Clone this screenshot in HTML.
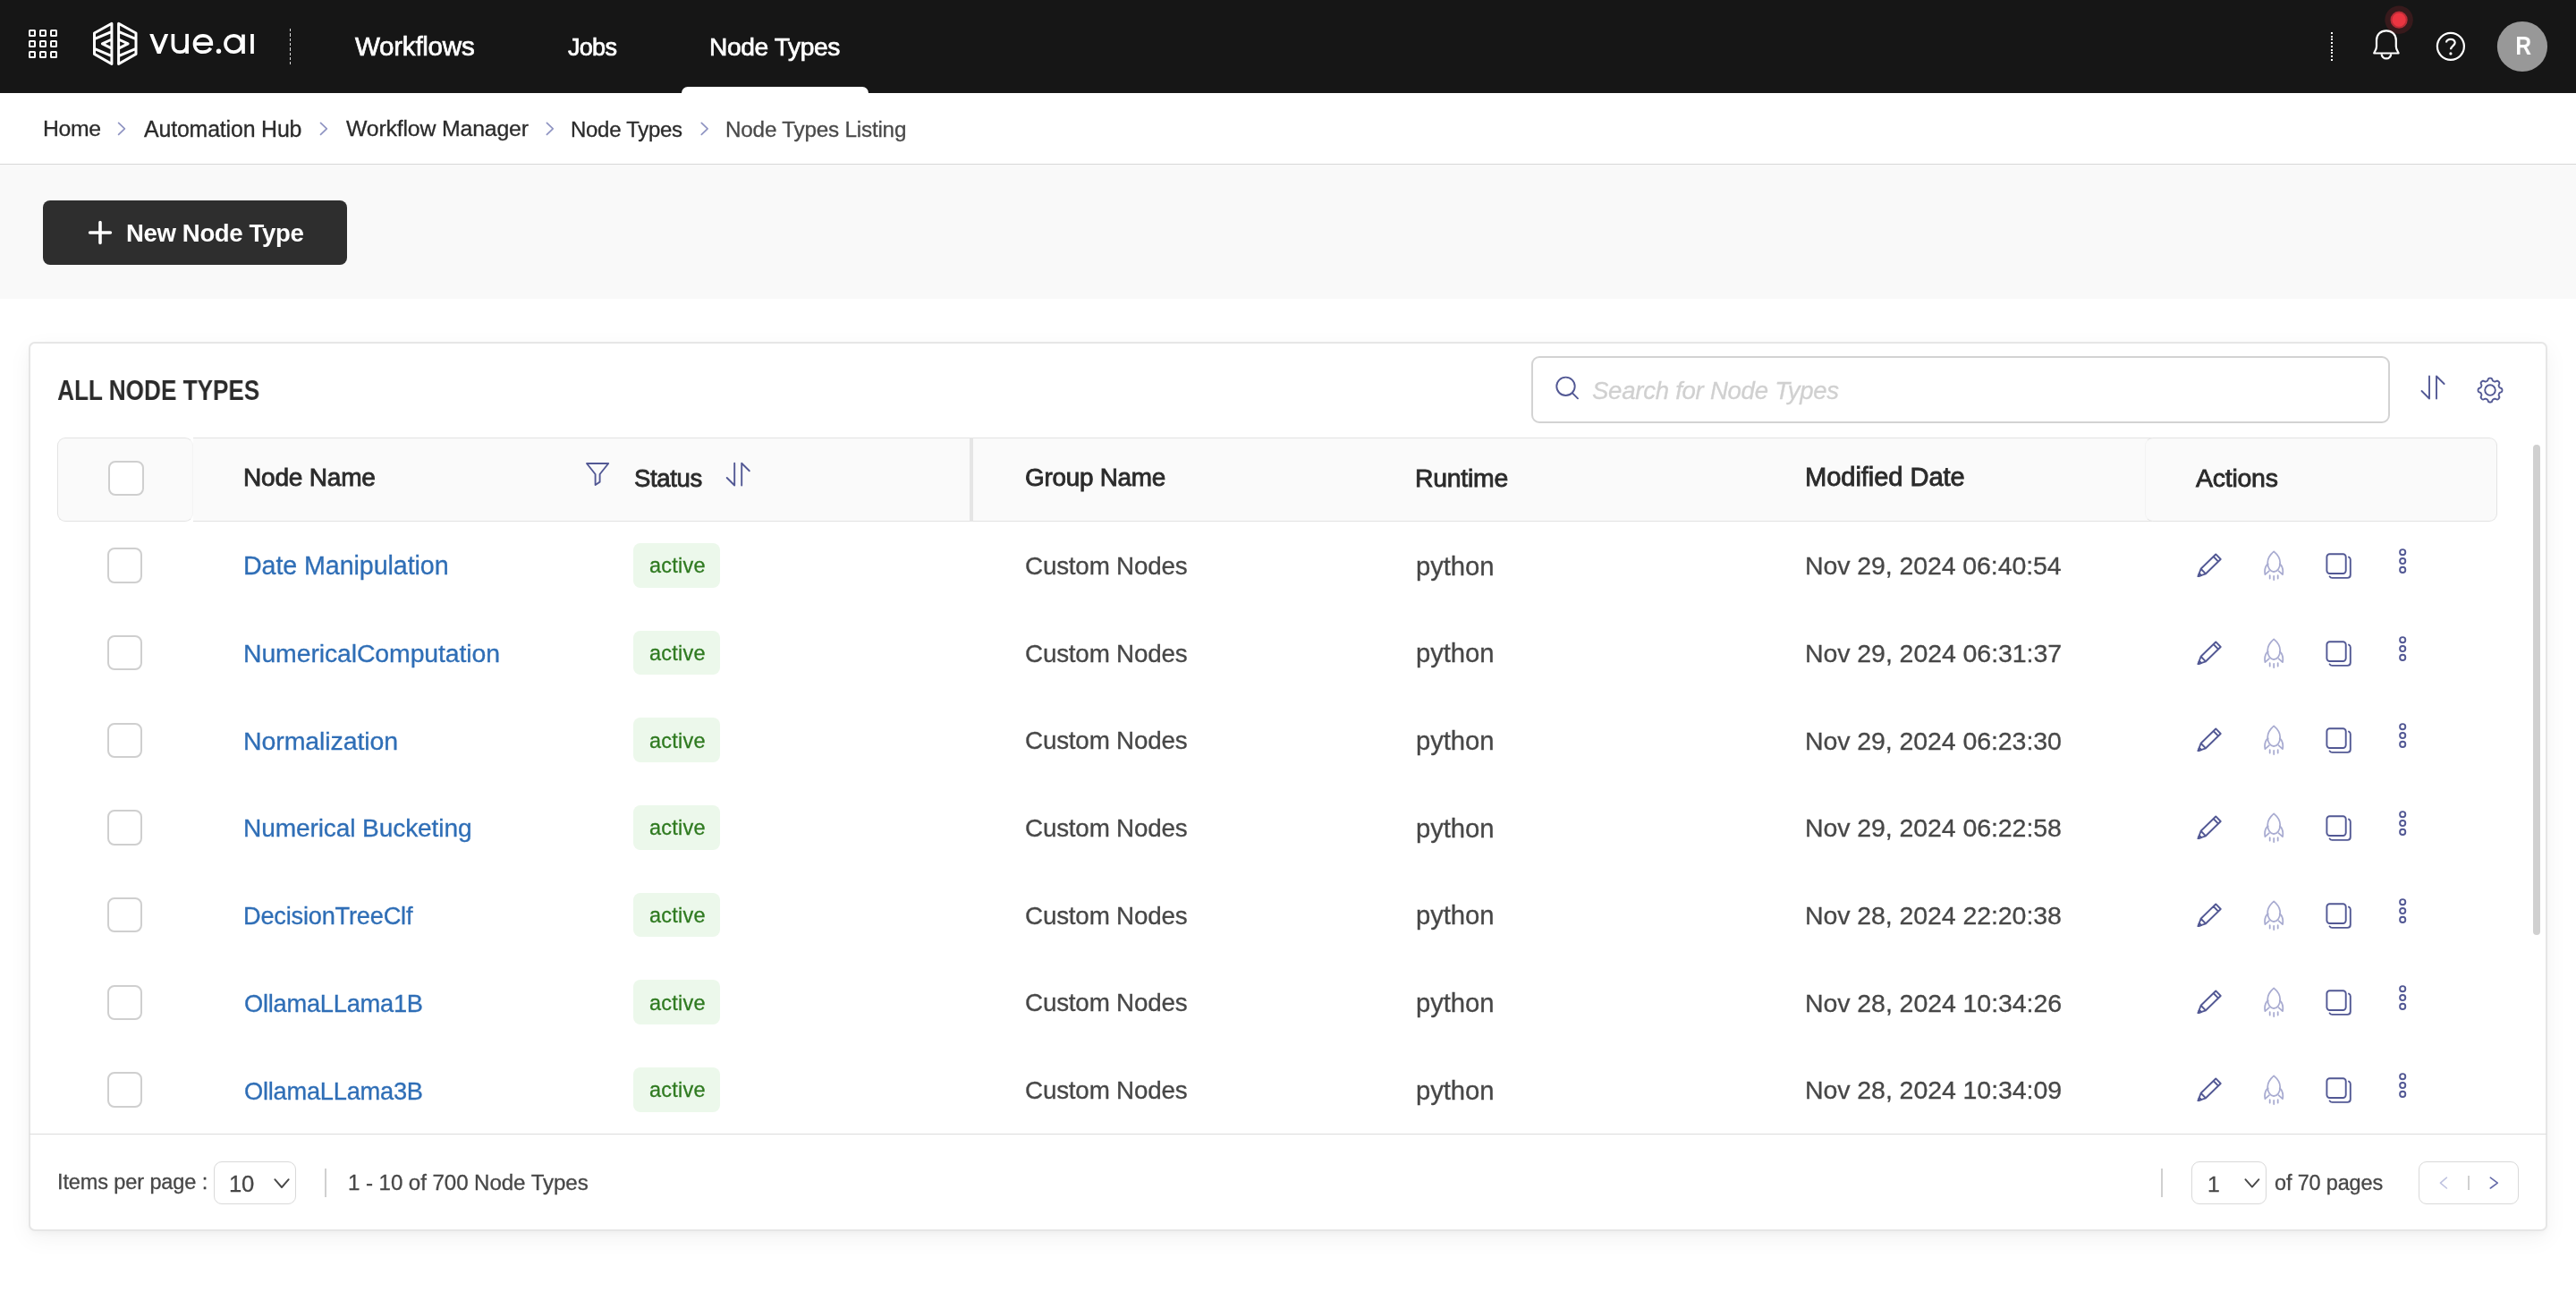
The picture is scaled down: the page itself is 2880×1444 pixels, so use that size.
<!DOCTYPE html>
<html><head><meta charset="utf-8"><title>Node Types Listing</title>
<style>
html,body{margin:0;padding:0;width:2880px;height:1444px;overflow:hidden;background:#fff;font-family:"Liberation Sans",sans-serif;}
.a{position:absolute;box-sizing:border-box}
.t{position:absolute;white-space:pre;will-change:transform}
#nav{position:absolute;left:0;top:0;width:2880px;height:104px;background:#161616}
.gsq{position:absolute;width:8.3px;height:8.3px;border:2px solid #fff;border-radius:1.5px;box-sizing:border-box}
#crumb{position:absolute;left:0;top:104px;width:2880px;height:80px;background:#fff;border-bottom:1px solid #d8d8d8;box-sizing:border-box}
#strip{position:absolute;left:0;top:184px;width:2880px;height:150px;background:#f9f9f9}
#btn{position:absolute;left:48px;top:224px;width:340px;height:72px;background:#2e2e2e;border-radius:8px}
#card{position:absolute;left:32px;top:381.8px;width:2815.7px;height:994.7px;border:2px solid #e6e6e6;border-radius:7px;box-sizing:border-box;background:#fff;box-shadow:0 3px 6px rgba(0,0,0,0.025),0 8px 26px rgba(0,0,0,0.05)}
#search{position:absolute;left:1711.8px;top:397.9px;width:960px;height:75px;border:2px solid #d3d3d3;border-radius:9px;box-sizing:border-box}
.hdr{position:absolute;top:489.3px;height:93.8px;background:#fafafa;box-sizing:border-box;border-top:1.2px solid #e3e3e3;border-bottom:1.2px solid #e3e3e3}
.cb{position:absolute;width:39.4px;height:39.3px;border:2px solid #cfcfcf;border-radius:8px;box-sizing:border-box;background:#fff}
.badge{position:absolute;width:96.7px;height:49.5px;background:#ecf8eb;border-radius:8px}
.ic{position:absolute;overflow:visible}
.sel{position:absolute;border:1.2px solid #d9d9d9;border-radius:9px;box-sizing:border-box;background:#fff}
</style></head>
<body>
<svg width="0" height="0" style="position:absolute">
<defs>
<g id="acts" fill="none" stroke-linecap="round" stroke-linejoin="round">
  <g stroke="#525894" stroke-width="1.9">
    <g transform="translate(7.6,36.1) rotate(-44.3)">
      <path d="M0,0 L8,-3.9 H31.3 V3.9 H8 Z M8,-3.9 V3.9 M27.6,-3.9 V3.9"/>
      <path d="M0,0 L3.2,-1.6 V1.6 Z" fill="#525894"/>
    </g>
  </g>
  <g stroke="#a9acd1" stroke-width="1.8">
    <path d="M92.2,8.4 C96.6,12 99.2,16 99.2,21 C99.2,27 95.9,31 92.2,31 C88.5,31 85.2,27 85.2,21 C85.2,16 87.8,12 92.2,8.4 Z"/>
    <path d="M85.6,22.3 C82.6,24.8 81.4,28.3 82.4,34.2 L86.9,30.2 M98.8,22.3 C101.8,24.8 103,28.3 102,34.2 L97.5,30.2"/>
    <path d="M87.7,35.2 V38.6 M92.2,35.8 V40 M96.7,35.2 V38.6"/>
  </g>
  <g stroke="#525894" stroke-width="1.9">
    <rect x="151.4" y="11.2" width="21.3" height="21.8" rx="3.2"/>
    <path d="M176,14.6 Q177.8,15.4 177.8,17.6 V34.5 Q177.8,37.9 174.4,37.9 H157.4 Q155.4,37.9 154.6,36.4"/>
    <circle cx="236.2" cy="9.2" r="3.1"/>
    <circle cx="236.2" cy="19.05" r="3.1"/>
    <circle cx="236.2" cy="28.9" r="3.1"/>
  </g>
</g>
</defs>
</svg>

<div id="nav"></div>
<!-- grid icon -->
<div class="gsq" style="left:31.8px;top:32.9px"></div><div class="gsq" style="left:43.9px;top:32.9px"></div><div class="gsq" style="left:56px;top:32.9px"></div>
<div class="gsq" style="left:31.8px;top:45px"></div><div class="gsq" style="left:43.9px;top:45px"></div><div class="gsq" style="left:56px;top:45px"></div>
<div class="gsq" style="left:31.8px;top:57px"></div><div class="gsq" style="left:43.9px;top:57px"></div><div class="gsq" style="left:56px;top:57px"></div>
<!-- logo -->
<svg class="ic" style="left:98px;top:20px" width="64" height="60" viewBox="0 0 64 60">
 <g fill="none" stroke="#fff" stroke-width="3" stroke-linejoin="round">
  <path d="M26.9,6.3 L7.5,17 V40.4 L26.9,51.5 Z M7.5,23.7 L26.9,15.3 M26.9,24 L16.4,28.9 L26.9,34.1 M7.5,34.3 L26.9,42.7"/>
  <path d="M34.6,6.3 L54,17 V40.4 L34.6,51.5 Z M54,23.7 L34.6,15.3 M34.6,24 L45.1,28.9 L34.6,34.1 M54,34.3 L34.6,42.7"/>
 </g>
</svg>
<svg class="ic" style="left:160px;top:30px" width="132" height="38" viewBox="0 0 132 38">
 <g fill="none" stroke="#fff" stroke-width="3.7">
  
  <path d="M33.4,7.9 V20 C33.4,25.5 36.6,28.2 41.2,28.2 C45.8,28.2 49.1,25.5 49.1,20"/>
  <path d="M49.1,7.9 V29.9"/>
  <path d="M58.2,19.2 H76.3 C76.3,13.5 72.6,9.8 66.9,9.8 C61.2,9.8 57.5,13.8 57.5,19 C57.5,24.4 61.2,28.2 66.9,28.2 C70.6,28.2 73.8,26.6 75.6,23.8"/>
  <circle cx="101.2" cy="19" r="9.2"/>
  <path d="M112,8.5 V29.9 M122,7.9 V29.9"/>
 </g>
 <circle cx="84.5" cy="27.3" r="2.7" fill="#fff"/>
 <path d="M7.2,7.9 H11.3 L17.7,23.6 L24.1,7.9 H28.2 L19.6,29.9 H15.8 Z" fill="#fff"/>
</svg>
<div class="a" style="left:323.7px;top:31.8px;width:1.3px;height:40.4px;background:repeating-linear-gradient(to bottom,#d8d8d8 0 3.2px,transparent 3.2px 5.33px)"></div>
<div class="a" style="left:761.8px;top:96.9px;width:209px;height:7.5px;background:#fff;border-radius:8px 8px 0 0"></div>
<!-- right nav -->
<div class="a" style="left:2606px;top:36px;width:2px;height:32.2px;background:repeating-linear-gradient(to bottom,#fff 0 2px,transparent 2px 3.75px)"></div>
<svg class="ic" style="left:0;top:0" width="2880" height="104" viewBox="0 0 2880 104">
 <g fill="none" stroke="#fff" stroke-width="2.2" stroke-linejoin="round">
  <path d="M2654.2,59.5 C2654.2,58 2657,56 2657,52 V45 C2657,38.5 2661.5,34.3 2667.9,34.3 C2674.3,34.3 2678.8,38.5 2678.8,45 V52 C2678.8,56 2681.6,58 2681.6,59.5 Z"/>
  <path d="M2662.6,60.2 A5.3,5.3 0 0 0 2673.2,60.2"/>
  <circle cx="2739.9" cy="51.85" r="15"/>
  <path d="M2735,47.5 C2735,45.3 2737.2,43.8 2739.9,43.8 C2742.6,43.8 2744.7,45.5 2744.7,47.8 C2744.7,50.9 2740,51.4 2740,55.3"/>
 </g>
 <circle cx="2739.9" cy="59.9" r="1.6" fill="#fff"/>
 <circle cx="2682.1" cy="22.2" r="15.7" fill="#ed3340" fill-opacity="0.16"/>
 <circle cx="2682.1" cy="22.2" r="8.6" fill="#ec3541" stroke="#b82c36" stroke-width="2"/>
 <circle cx="2819.95" cy="52" r="28.1" fill="#989898"/>
</svg>

<div id="crumb"></div>
<svg class="ic" style="left:0;top:104px" width="1100" height="80" viewBox="0 104 1100 80">
 <g fill="none" stroke="#8f94c2" stroke-width="1.7" stroke-linecap="round" stroke-linejoin="round">
  <path d="M132.6,137.4 L139.4,143.8 L132.6,150.4"/>
  <path d="M358.5,137.4 L365.3,143.8 L358.5,150.4"/>
  <path d="M611.4,137.4 L618.2,143.8 L611.4,150.4"/>
  <path d="M784.3,137.4 L791.1,143.8 L784.3,150.4"/>
 </g>
</svg>
<div id="strip"></div>
<div id="btn"></div>
<svg class="ic" style="left:0;top:0" width="400" height="334" viewBox="0 0 400 334">
 <path d="M112,248.6 V271.4 M100.6,260 H123.4" stroke="#fff" stroke-width="3.6" stroke-linecap="round"/>
</svg>

<div id="card"></div>
<div id="search"></div>
<svg class="ic" style="left:0;top:0" width="2880" height="1444" viewBox="0 0 2880 1444">
 <g fill="none" stroke="#525894" stroke-width="1.9" stroke-linecap="round" stroke-linejoin="round">
  <circle cx="1750.5" cy="431.8" r="10.2"/>
  <path d="M1758,439.3 L1764,445.3"/>
  <path d="M2716,420.5 V445.5 M2707.5,437 L2716,445.5 M2724,445.5 V420.5 L2732.6,429"/>
  <path d="M2784.00,422.65 L2784.53,422.67 L2785.05,422.76 L2785.55,422.97 L2786.01,423.44 L2786.36,424.23 L2786.66,425.03 L2786.98,425.53 L2787.34,425.81 L2787.73,426.00 L2788.11,426.17 L2788.51,426.32 L2788.91,426.46 L2789.37,426.52 L2789.95,426.40 L2790.72,426.04 L2791.54,425.73 L2792.18,425.72 L2792.69,425.93 L2793.12,426.23 L2793.51,426.59 L2793.87,426.98 L2794.17,427.41 L2794.38,427.92 L2794.37,428.56 L2794.06,429.38 L2793.70,430.15 L2793.58,430.73 L2793.64,431.19 L2793.78,431.59 L2793.93,431.99 L2794.10,432.37 L2794.29,432.76 L2794.57,433.12 L2795.07,433.44 L2795.87,433.74 L2796.66,434.09 L2797.13,434.55 L2797.34,435.05 L2797.43,435.57 L2797.45,436.10 L2797.43,436.63 L2797.34,437.15 L2797.13,437.65 L2796.66,438.11 L2795.87,438.46 L2795.07,438.76 L2794.57,439.08 L2794.29,439.44 L2794.10,439.83 L2793.93,440.21 L2793.78,440.61 L2793.64,441.01 L2793.58,441.47 L2793.70,442.05 L2794.06,442.82 L2794.37,443.64 L2794.38,444.28 L2794.17,444.79 L2793.87,445.22 L2793.51,445.61 L2793.12,445.97 L2792.69,446.27 L2792.18,446.48 L2791.54,446.47 L2790.72,446.16 L2789.95,445.80 L2789.37,445.68 L2788.91,445.74 L2788.51,445.88 L2788.11,446.03 L2787.73,446.20 L2787.34,446.39 L2786.98,446.67 L2786.66,447.17 L2786.36,447.97 L2786.01,448.76 L2785.55,449.23 L2785.05,449.44 L2784.53,449.53 L2784.00,449.55 L2783.47,449.53 L2782.95,449.44 L2782.45,449.23 L2781.99,448.76 L2781.64,447.97 L2781.34,447.17 L2781.02,446.67 L2780.66,446.39 L2780.27,446.20 L2779.89,446.03 L2779.49,445.88 L2779.09,445.74 L2778.63,445.68 L2778.05,445.80 L2777.28,446.16 L2776.46,446.47 L2775.82,446.48 L2775.31,446.27 L2774.88,445.97 L2774.49,445.61 L2774.13,445.22 L2773.83,444.79 L2773.62,444.28 L2773.63,443.64 L2773.94,442.82 L2774.30,442.05 L2774.42,441.47 L2774.36,441.01 L2774.22,440.61 L2774.07,440.21 L2773.90,439.83 L2773.71,439.44 L2773.43,439.08 L2772.93,438.76 L2772.13,438.46 L2771.34,438.11 L2770.87,437.65 L2770.66,437.15 L2770.57,436.63 L2770.55,436.10 L2770.57,435.57 L2770.66,435.05 L2770.87,434.55 L2771.34,434.09 L2772.13,433.74 L2772.93,433.44 L2773.43,433.12 L2773.71,432.76 L2773.90,432.37 L2774.07,431.99 L2774.22,431.59 L2774.36,431.19 L2774.42,430.73 L2774.30,430.15 L2773.94,429.38 L2773.63,428.56 L2773.62,427.92 L2773.83,427.41 L2774.13,426.98 L2774.49,426.59 L2774.88,426.23 L2775.31,425.93 L2775.82,425.72 L2776.46,425.73 L2777.28,426.04 L2778.05,426.40 L2778.63,426.52 L2779.09,426.46 L2779.49,426.32 L2779.89,426.17 L2780.27,426.00 L2780.66,425.81 L2781.02,425.53 L2781.34,425.03 L2781.64,424.23 L2781.99,423.44 L2782.45,422.97 L2782.95,422.76 L2783.47,422.67 Z"/>
  <circle cx="2784" cy="436.1" r="5.8"/>
 </g>
</svg>

<!-- table header -->
<div class="hdr" style="left:215.8px;width:2190px"></div>
<div class="hdr" style="left:64.3px;width:151.5px;border:1.2px solid #e3e3e3;border-right-color:#f3f3f3;border-radius:9px"></div>
<div class="hdr" style="left:2398px;width:394px;border:1.2px solid #e3e3e3;border-left-color:#f3f3f3;border-radius:9px"></div>
<div class="a" style="left:1084.1px;top:489.3px;width:3.9px;height:93.8px;background:#e5e5e5"></div>
<div class="cb" style="left:121.4px;top:514.5px"></div>
<svg class="ic" style="left:0;top:0" width="1000" height="600" viewBox="0 0 1000 600">
 <g fill="none" stroke="#525894" stroke-width="1.9" stroke-linecap="round" stroke-linejoin="round">
  <path d="M656,518 H680.2 L670.6,530 V538.6 L665.6,542 V530 Z"/>
  <path d="M821.2,517.8 V542.5 M812.7,534 L821.2,542.5 M829.2,542.5 V517.8 L837.8,526.3"/>
 </g>
</svg>
<div class="cb" style="left:120px;top:612.30px"></div>
<div class="badge" style="left:708px;top:607.10px"></div>
<svg class="ic" style="left:2450px;top:608.00px" width="250" height="50" viewBox="0 0 250 50"><use href="#acts"/></svg>
<div class="cb" style="left:120px;top:709.97px"></div>
<div class="badge" style="left:708px;top:704.77px"></div>
<svg class="ic" style="left:2450px;top:705.67px" width="250" height="50" viewBox="0 0 250 50"><use href="#acts"/></svg>
<div class="cb" style="left:120px;top:807.64px"></div>
<div class="badge" style="left:708px;top:802.44px"></div>
<svg class="ic" style="left:2450px;top:803.34px" width="250" height="50" viewBox="0 0 250 50"><use href="#acts"/></svg>
<div class="cb" style="left:120px;top:905.31px"></div>
<div class="badge" style="left:708px;top:900.11px"></div>
<svg class="ic" style="left:2450px;top:901.01px" width="250" height="50" viewBox="0 0 250 50"><use href="#acts"/></svg>
<div class="cb" style="left:120px;top:1002.98px"></div>
<div class="badge" style="left:708px;top:997.78px"></div>
<svg class="ic" style="left:2450px;top:998.68px" width="250" height="50" viewBox="0 0 250 50"><use href="#acts"/></svg>
<div class="cb" style="left:120px;top:1100.65px"></div>
<div class="badge" style="left:708px;top:1095.45px"></div>
<svg class="ic" style="left:2450px;top:1096.35px" width="250" height="50" viewBox="0 0 250 50"><use href="#acts"/></svg>
<div class="cb" style="left:120px;top:1198.32px"></div>
<div class="badge" style="left:708px;top:1193.12px"></div>
<svg class="ic" style="left:2450px;top:1194.02px" width="250" height="50" viewBox="0 0 250 50"><use href="#acts"/></svg>
<div class="a" style="left:2832.4px;top:497.3px;width:8.1px;height:548px;background:#d0d0d0;border-radius:4px"></div>
<div class="a" style="left:33px;top:1266.6px;width:2814px;height:1.2px;background:#dcdcdc"></div>

<!-- footer -->
<div class="sel" style="left:239.1px;top:1298.3px;width:91.6px;height:47.3px"></div>
<div class="sel" style="left:2450.2px;top:1298px;width:83.5px;height:47.6px"></div>
<div class="sel" style="left:2704.2px;top:1298px;width:111.4px;height:47.6px"></div>
<div class="a" style="left:362.8px;top:1306px;width:2px;height:31.5px;background:#d0d0d0"></div>
<div class="a" style="left:2416px;top:1306px;width:2px;height:31.8px;background:#d0d0d0"></div>
<div class="a" style="left:2758.8px;top:1314px;width:2px;height:16px;background:#d0d0d0"></div>
<svg class="ic" style="left:0;top:1280px" width="2880" height="80" viewBox="0 1280 2880 80">
 <g fill="none" stroke-width="1.9" stroke-linecap="round" stroke-linejoin="round">
  <path d="M307.3,1318.2 L315,1327 L322.7,1318.2" stroke="#474747"/>
  <path d="M2510.4,1318.2 L2517.9,1326.6 L2525.4,1318.2" stroke="#474747"/>
  <path d="M2735.4,1316.2 L2728.4,1322.1 L2735.4,1328" stroke="#bfc3e0" stroke-width="1.6"/>
  <path d="M2784.3,1316.2 L2792.3,1322.1 L2784.3,1328" stroke="#646aa8" stroke-width="1.6"/>
 </g>
</svg>
<div class="t" style="left:397.30px;top:36.95px;font-size:29.59px;line-height:29.59px;color:#ffffff;letter-spacing:-0.274px;-webkit-text-stroke:0.7px #ffffff">Workflows</div>
<div class="t" style="left:634.66px;top:39.06px;font-size:27.10px;line-height:27.10px;color:#ffffff;letter-spacing:-0.760px;-webkit-text-stroke:0.7px #ffffff">Jobs</div>
<div class="t" style="left:792.54px;top:38.12px;font-size:28.21px;line-height:28.21px;color:#ffffff;letter-spacing:-0.408px;-webkit-text-stroke:0.7px #ffffff">Node Types</div>
<div class="t" style="left:2811.53px;top:36.45px;font-size:30.29px;line-height:30.29px;color:#ffffff;transform:scaleX(0.8044);transform-origin:2.12px 0;font-weight:bold">R</div>
<div class="t" style="left:47.92px;top:132.23px;font-size:24.79px;line-height:24.79px;color:#2b2b2b;letter-spacing:-0.337px;-webkit-text-stroke:0.3px #2b2b2b">Home</div>
<div class="t" style="left:161.40px;top:132.12px;font-size:24.92px;line-height:24.92px;color:#2b2b2b;letter-spacing:-0.164px;-webkit-text-stroke:0.3px #2b2b2b">Automation Hub</div>
<div class="t" style="left:386.75px;top:132.20px;font-size:24.83px;line-height:24.83px;color:#2b2b2b;letter-spacing:-0.171px;-webkit-text-stroke:0.3px #2b2b2b">Workflow Manager</div>
<div class="t" style="left:638.48px;top:132.92px;font-size:23.97px;line-height:23.97px;color:#2b2b2b;letter-spacing:-0.278px;-webkit-text-stroke:0.3px #2b2b2b">Node Types</div>
<div class="t" style="left:810.86px;top:132.68px;font-size:24.25px;line-height:24.25px;color:#4a4a4a;letter-spacing:-0.201px;-webkit-text-stroke:0.3px #4a4a4a">Node Types Listing</div>
<div class="t" style="left:141.12px;top:246.76px;font-size:27.57px;line-height:27.57px;color:#ffffff;letter-spacing:-0.368px;font-weight:bold">New Node Type</div>
<div class="t" style="left:63.94px;top:421.13px;font-size:30.43px;line-height:30.43px;color:#2b2b2b;transform:scaleX(0.8595);transform-origin:0.91px 0;font-weight:bold">ALL NODE TYPES</div>
<div class="t" style="left:1779.97px;top:422.56px;font-size:27.58px;line-height:27.58px;color:#d0d0d0;letter-spacing:-0.271px;font-style:italic;-webkit-text-stroke:0.3px #d0d0d0">Search for Node Types</div>
<div class="t" style="left:272.13px;top:520.21px;font-size:28.10px;line-height:28.10px;color:#2b2b2b;letter-spacing:-0.241px;-webkit-text-stroke:0.85px #2b2b2b">Node Name</div>
<div class="t" style="left:708.80px;top:520.70px;font-size:27.53px;line-height:27.53px;color:#2b2b2b;letter-spacing:-0.340px;-webkit-text-stroke:0.85px #2b2b2b">Status</div>
<div class="t" style="left:1146.48px;top:520.39px;font-size:27.89px;line-height:27.89px;color:#2b2b2b;letter-spacing:-0.247px;-webkit-text-stroke:0.85px #2b2b2b">Group Name</div>
<div class="t" style="left:1582.30px;top:519.97px;font-size:28.39px;line-height:28.39px;color:#2b2b2b;letter-spacing:-0.235px;-webkit-text-stroke:0.85px #2b2b2b">Runtime</div>
<div class="t" style="left:2018.04px;top:519.33px;font-size:29.14px;line-height:29.14px;color:#2b2b2b;letter-spacing:-0.083px;-webkit-text-stroke:0.85px #2b2b2b">Modified Date</div>
<div class="t" style="left:2455.47px;top:519.93px;font-size:28.44px;line-height:28.44px;color:#2b2b2b;letter-spacing:-0.222px;-webkit-text-stroke:0.85px #2b2b2b">Actions</div>
<div class="t" style="left:271.91px;top:618.34px;font-size:28.66px;line-height:28.66px;color:#2f6eb6;letter-spacing:-0.085px;-webkit-text-stroke:0.3px #2f6eb6">Date Manipulation</div>
<div class="t" style="left:725.66px;top:621.44px;font-size:23.49px;line-height:23.49px;color:#2f7a20;letter-spacing:0.225px;-webkit-text-stroke:0.3px #2f7a20">active</div>
<div class="t" style="left:1146.21px;top:619.07px;font-size:27.80px;line-height:27.80px;color:#474747;letter-spacing:-0.197px;-webkit-text-stroke:0.3px #474747">Custom Nodes</div>
<div class="t" style="left:1582.54px;top:617.81px;font-size:29.28px;line-height:29.28px;color:#474747;letter-spacing:-0.074px;-webkit-text-stroke:0.3px #474747">python</div>
<div class="t" style="left:2017.82px;top:618.46px;font-size:28.52px;line-height:28.52px;color:#474747;letter-spacing:-0.095px;-webkit-text-stroke:0.3px #474747">Nov 29, 2024 06:40:54</div>
<div class="t" style="left:271.93px;top:716.20px;font-size:28.43px;line-height:28.43px;color:#2f6eb6;letter-spacing:-0.108px;-webkit-text-stroke:0.3px #2f6eb6">NumericalComputation</div>
<div class="t" style="left:725.66px;top:719.11px;font-size:23.49px;line-height:23.49px;color:#2f7a20;letter-spacing:0.225px;-webkit-text-stroke:0.3px #2f7a20">active</div>
<div class="t" style="left:1146.21px;top:716.74px;font-size:27.80px;line-height:27.80px;color:#474747;letter-spacing:-0.197px;-webkit-text-stroke:0.3px #474747">Custom Nodes</div>
<div class="t" style="left:1582.54px;top:715.48px;font-size:29.28px;line-height:29.28px;color:#474747;letter-spacing:-0.074px;-webkit-text-stroke:0.3px #474747">python</div>
<div class="t" style="left:2017.81px;top:716.09px;font-size:28.56px;line-height:28.56px;color:#474747;letter-spacing:-0.090px;-webkit-text-stroke:0.3px #474747">Nov 29, 2024 06:31:37</div>
<div class="t" style="left:271.92px;top:813.79px;font-size:28.52px;line-height:28.52px;color:#2f6eb6;letter-spacing:-0.104px;-webkit-text-stroke:0.3px #2f6eb6">Normalization</div>
<div class="t" style="left:725.66px;top:816.78px;font-size:23.49px;line-height:23.49px;color:#2f7a20;letter-spacing:0.225px;-webkit-text-stroke:0.3px #2f7a20">active</div>
<div class="t" style="left:1146.21px;top:814.41px;font-size:27.80px;line-height:27.80px;color:#474747;letter-spacing:-0.197px;-webkit-text-stroke:0.3px #474747">Custom Nodes</div>
<div class="t" style="left:1582.54px;top:813.15px;font-size:29.28px;line-height:29.28px;color:#474747;letter-spacing:-0.074px;-webkit-text-stroke:0.3px #474747">python</div>
<div class="t" style="left:2017.82px;top:813.78px;font-size:28.54px;line-height:28.54px;color:#474747;letter-spacing:-0.093px;-webkit-text-stroke:0.3px #474747">Nov 29, 2024 06:23:30</div>
<div class="t" style="left:271.95px;top:911.79px;font-size:28.14px;line-height:28.14px;color:#2f6eb6;letter-spacing:-0.130px;-webkit-text-stroke:0.3px #2f6eb6">Numerical Bucketing</div>
<div class="t" style="left:725.66px;top:914.45px;font-size:23.49px;line-height:23.49px;color:#2f7a20;letter-spacing:0.225px;-webkit-text-stroke:0.3px #2f7a20">active</div>
<div class="t" style="left:1146.21px;top:912.08px;font-size:27.80px;line-height:27.80px;color:#474747;letter-spacing:-0.197px;-webkit-text-stroke:0.3px #474747">Custom Nodes</div>
<div class="t" style="left:1582.54px;top:910.82px;font-size:29.28px;line-height:29.28px;color:#474747;letter-spacing:-0.074px;-webkit-text-stroke:0.3px #474747">python</div>
<div class="t" style="left:2017.82px;top:911.45px;font-size:28.54px;line-height:28.54px;color:#474747;letter-spacing:-0.093px;-webkit-text-stroke:0.3px #474747">Nov 29, 2024 06:22:58</div>
<div class="t" style="left:272.02px;top:1010.25px;font-size:27.21px;line-height:27.21px;color:#2f6eb6;letter-spacing:-0.216px;-webkit-text-stroke:0.3px #2f6eb6">DecisionTreeClf</div>
<div class="t" style="left:725.66px;top:1012.12px;font-size:23.49px;line-height:23.49px;color:#2f7a20;letter-spacing:0.225px;-webkit-text-stroke:0.3px #2f7a20">active</div>
<div class="t" style="left:1146.21px;top:1009.75px;font-size:27.80px;line-height:27.80px;color:#474747;letter-spacing:-0.197px;-webkit-text-stroke:0.3px #474747">Custom Nodes</div>
<div class="t" style="left:1582.54px;top:1008.49px;font-size:29.28px;line-height:29.28px;color:#474747;letter-spacing:-0.074px;-webkit-text-stroke:0.3px #474747">python</div>
<div class="t" style="left:2017.82px;top:1009.12px;font-size:28.54px;line-height:28.54px;color:#474747;letter-spacing:-0.093px;-webkit-text-stroke:0.3px #474747">Nov 28, 2024 22:20:38</div>
<div class="t" style="left:272.84px;top:1107.86px;font-size:27.28px;line-height:27.28px;color:#2f6eb6;letter-spacing:-0.256px;-webkit-text-stroke:0.3px #2f6eb6">OllamaLLama1B</div>
<div class="t" style="left:725.66px;top:1109.79px;font-size:23.49px;line-height:23.49px;color:#2f7a20;letter-spacing:0.225px;-webkit-text-stroke:0.3px #2f7a20">active</div>
<div class="t" style="left:1146.21px;top:1107.42px;font-size:27.80px;line-height:27.80px;color:#474747;letter-spacing:-0.197px;-webkit-text-stroke:0.3px #474747">Custom Nodes</div>
<div class="t" style="left:1582.54px;top:1106.16px;font-size:29.28px;line-height:29.28px;color:#474747;letter-spacing:-0.074px;-webkit-text-stroke:0.3px #474747">python</div>
<div class="t" style="left:2017.81px;top:1106.77px;font-size:28.56px;line-height:28.56px;color:#474747;letter-spacing:-0.090px;-webkit-text-stroke:0.3px #474747">Nov 28, 2024 10:34:26</div>
<div class="t" style="left:272.84px;top:1205.53px;font-size:27.28px;line-height:27.28px;color:#2f6eb6;letter-spacing:-0.256px;-webkit-text-stroke:0.3px #2f6eb6">OllamaLLama3B</div>
<div class="t" style="left:725.66px;top:1207.46px;font-size:23.49px;line-height:23.49px;color:#2f7a20;letter-spacing:0.225px;-webkit-text-stroke:0.3px #2f7a20">active</div>
<div class="t" style="left:1146.21px;top:1205.09px;font-size:27.80px;line-height:27.80px;color:#474747;letter-spacing:-0.197px;-webkit-text-stroke:0.3px #474747">Custom Nodes</div>
<div class="t" style="left:1582.54px;top:1203.83px;font-size:29.28px;line-height:29.28px;color:#474747;letter-spacing:-0.074px;-webkit-text-stroke:0.3px #474747">python</div>
<div class="t" style="left:2017.81px;top:1204.44px;font-size:28.56px;line-height:28.56px;color:#474747;letter-spacing:-0.090px;-webkit-text-stroke:0.3px #474747">Nov 28, 2024 10:34:09</div>
<div class="t" style="left:63.78px;top:1310.49px;font-size:23.54px;line-height:23.54px;color:#474747;letter-spacing:-0.123px;-webkit-text-stroke:0.3px #474747">Items per page :</div>
<div class="t" style="left:255.75px;top:1310.79px;font-size:25.65px;line-height:25.65px;color:#474747;letter-spacing:-0.148px;-webkit-text-stroke:0.3px #474747">10</div>
<div class="t" style="left:388.67px;top:1310.00px;font-size:24.11px;line-height:24.11px;color:#474747;letter-spacing:-0.070px;-webkit-text-stroke:0.3px #474747">1 - 10 of 700 Node Types</div>
<div class="t" style="left:2467.52px;top:1312.03px;font-size:24.78px;line-height:24.78px;color:#474747;-webkit-text-stroke:0.3px #474747">1</div>
<div class="t" style="left:2542.76px;top:1310.55px;font-size:23.47px;line-height:23.47px;color:#474747;letter-spacing:-0.150px;-webkit-text-stroke:0.3px #474747">of 70 pages</div>
</body></html>
